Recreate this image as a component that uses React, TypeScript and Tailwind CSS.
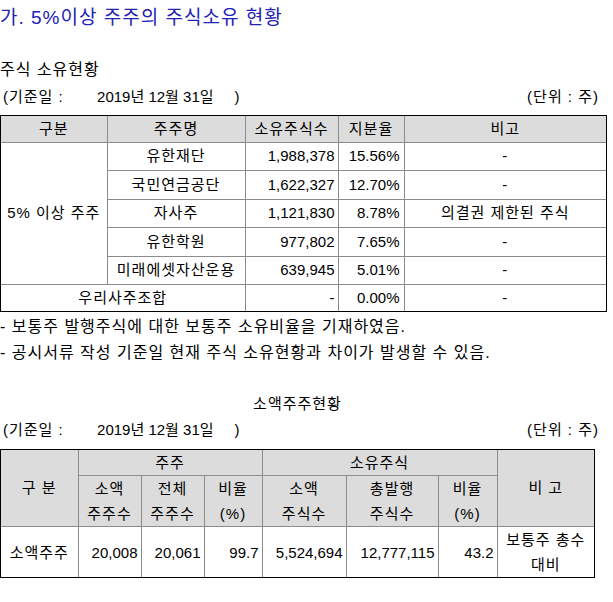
import React from 'react'

const font = { fontFamily: '"Liberation Sans", "Noto Sans CJK KR", sans-serif' }

const th = "border border-[#8c8c8c] bg-[#dcdcdc] font-normal text-center px-1"
const td = "border border-[#8c8c8c] bg-white px-1"
const num = td + " text-right pr-[3px] tracking-normal"

type Holder = { name: string; shares: string; ratio: string; note: string }

const holders: Holder[] = [
    { name: "유한재단", shares: "1,988,378", ratio: "15.56%", note: "-" },
    { name: "국민연금공단", shares: "1,622,327", ratio: "12.70%", note: "-" },
    { name: "자사주", shares: "1,121,830", ratio: "8.78%", note: "의결권 제한된 주식" },
    { name: "유한학원", shares: "977,802", ratio: "7.65%", note: "-" },
    { name: "미래에셋자산운용", shares: "639,945", ratio: "5.01%", note: "-" },
]

function DateLine({ className }: { className?: string }) {
    return (
        <div className={"flex justify-between items-center h-[26px] text-[15px] pr-[14px] " + (className ?? "")}>
            <span className="whitespace-pre pl-[3px]">
                (기준일 :<span className="tracking-normal">{"        2019년 12월 31일     )"}</span>
            </span>
            <span>(단위 : 주)</span>
        </div>
    )
}

function MajorTable() {
    return (
        <div className="w-[607px] border border-black">
            <table className="w-full border-collapse border-hidden text-[15px] table-fixed">
                <colgroup>
                    <col className="w-[106px]" />
                    <col className="w-[138px]" />
                    <col className="w-[93px]" />
                    <col className="w-[66px]" />
                    <col />
                </colgroup>
                <thead>
                    <tr className="h-[26px]">
                        <th className={th}>구분</th>
                        <th className={th}>주주명</th>
                        <th className={th}>소유주식수</th>
                        <th className={th}>지분율</th>
                        <th className={th}>비고</th>
                    </tr>
                </thead>
                <tbody>
                    {holders.map((h, idx) => (
                        <tr key={idx} className="h-[28.5px]">
                            {idx === 0 && (
                                <td rowSpan={5} className={td + " text-center"}>5% 이상 주주</td>
                            )}
                            <td className={td + " text-center"}>{h.name}</td>
                            <td className={num}>{h.shares}</td>
                            <td className={num + " pr-[4px]"}>{h.ratio}</td>
                            <td className={td + " text-center"}>{h.note}</td>
                        </tr>
                    ))}
                    <tr className="h-[26px]">
                        <td colSpan={2} className={td + " text-center"}>우리사주조합</td>
                        <td className={num}>-</td>
                        <td className={num + " pr-[4px]"}>0.00%</td>
                        <td className={td + " text-center"}>-</td>
                    </tr>
                </tbody>
            </table>
        </div>
    )
}

function MinorTable() {
    return (
        <div className="w-[595px] border border-black">
            <table className="w-full border-collapse border-hidden text-[15px] table-fixed leading-[25px]">
                <colgroup>
                    <col className="w-[77px]" />
                    <col className="w-[63px]" />
                    <col className="w-[63px]" />
                    <col className="w-[58px]" />
                    <col className="w-[84px]" />
                    <col className="w-[92px]" />
                    <col className="w-[59px]" />
                    <col />
                </colgroup>
                <thead>
                    <tr className="h-[26px]">
                        <th rowSpan={2} className={th}>구 분</th>
                        <th colSpan={3} className={th}>주주</th>
                        <th colSpan={3} className={th}>소유주식</th>
                        <th rowSpan={2} className={th}>비 고</th>
                    </tr>
                    <tr className="h-[50px]">
                        <th className={th}>소액<br />주주수</th>
                        <th className={th}>전체<br />주주수</th>
                        <th className={th}>비율<br />(%)</th>
                        <th className={th}>소액<br />주식수</th>
                        <th className={th}>총발행<br />주식수</th>
                        <th className={th}>비율<br />(%)</th>
                    </tr>
                </thead>
                <tbody>
                    <tr className="h-[49px]">
                        <td className={td + " text-center"}>소액주주</td>
                        <td className={num}>20,008</td>
                        <td className={num}>20,061</td>
                        <td className={num}>99.7</td>
                        <td className={num}>5,524,694</td>
                        <td className={num}>12,777,115</td>
                        <td className={num}>43.2</td>
                        <td className={td + " text-center"}>보통주 총수<br />대비</td>
                    </tr>
                </tbody>
            </table>
        </div>
    )
}

function App() {
    return (
        <div className="w-[613px] h-[602px] bg-white text-black overflow-hidden tracking-[1px]" style={font}>
            <div className="h-[36px] flex items-center text-[19px] text-[#2222b4]">가. 5%이상 주주의 주식소유 현황</div>
            <div className="mt-[20px] h-[28px] flex items-center text-[16px]">주식 소유현황</div>
            <DateLine className="mb-[5px]" />
            <MajorTable />
            <div className="text-[16px] mt-[2px]">
                <p className="h-[26px] flex items-center">- 보통주 발행주식에 대한 보통주 소유비율을 기재하였음.</p>
                <p className="h-[26px] flex items-center">- 공시서류 작성 기준일 현재 주식 소유현황과 차이가 발생할 수 있음.</p>
            </div>
            <div className="w-[595px] mt-[26px] h-[26px] flex items-center justify-center text-[15px]">소액주주현황</div>
            <DateLine className="mb-[5px]" />
            <MinorTable />
        </div>
    )
}

export default App
